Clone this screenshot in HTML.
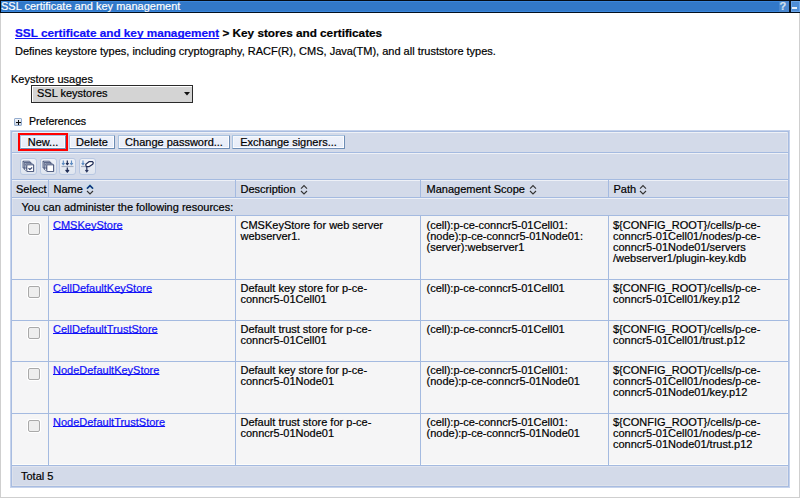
<!DOCTYPE html>
<html><head><meta charset="utf-8">
<style>
*{margin:0;padding:0;box-sizing:border-box}
html,body{width:800px;height:498px;overflow:hidden;background:#fff}
body{position:relative;-webkit-text-stroke:0.2px currentColor;font-family:"Liberation Sans",sans-serif;font-size:11px;line-height:11px;color:#000}
.a{position:absolute;white-space:nowrap}
#pb-l{position:absolute;left:0;top:0;width:1px;height:498px;background:#cfcfcf}
#pb-r{position:absolute;left:799px;top:0;width:1px;height:498px;background:#cfcfcf}
#pb-b{position:absolute;left:0;top:497px;width:800px;height:1px;background:#cfcfcf}
#title{position:absolute;left:0;top:0;width:800px;height:13px;background:#3278c8;border-top:1px solid #050b14;border-bottom:1px solid #03101e;border-left:1px solid #050b14;box-shadow:inset 0 1px 0 #3a86dc,inset 0 -1px 0 #3a86dc}
#title .t{position:absolute;left:0px;top:0px;color:#fff;font-size:11px;line-height:11px}
.lnk{color:#1010f8;text-decoration:underline}
.tl{text-underline-offset:0px}
.lnk{text-decoration-skip-ink:none}
b{font-weight:bold}
.sel{position:absolute;left:31px;top:85px;width:162px;height:18px;background:#d4d4d4;border:1px solid #2a2a2a;box-shadow:inset 1px 1px 0 #fff}
.tb{position:absolute;left:10px;top:130px;width:780px;height:358px;border:1px solid #c6d3ec;box-shadow:inset 0 0 0 1px #a8bce0;background:#d3dae9}
.hl{position:absolute;background:#a4bae0}
.wl{position:absolute;background:#eef1f7}
.btn{position:absolute;top:135px;height:14px;border:1px solid;border-color:#aac3e0 #6d8db5 #6d8db5 #aac3e0;background:linear-gradient(#eef2fa,#e6ecf8);box-shadow:inset -1px -1px 0 #fdfdff,inset 1px 1px 0 #f6f8fc;border-radius:1px;text-align:center;line-height:11px;padding-top:1px}
.ib{position:absolute;top:158px;width:17px;height:17px;border:1px solid #b9c8e2;border-radius:3px;background:linear-gradient(#eef1f7,#dfe5ef)}
.row{position:absolute;left:12px;width:776px;background:#f5f5f6;box-shadow:inset -1px 0 0 #fcfcfc}
.cb{position:absolute;left:28px;width:12px;height:12px;border:1.5px solid #a9a9a9;border-radius:2px;background:#eee;box-shadow:0 0 0 1px #fff}
</style></head><body>
<div id="pb-l"></div><div id="pb-r"></div><div id="pb-b"></div>
<div id="title"><div class="t">SSL certificate and key management</div>
 <div style="position:absolute;left:778px;top:0;width:10px;height:11px;background:#4a88d0"></div>
 <div style="position:absolute;left:778.5px;top:0px;color:#d3e0ee;font-size:11px;line-height:11px;font-weight:bold">?</div>
 <div style="position:absolute;left:788px;top:0;width:2px;height:11px;background:#0d1726"></div>
 <div style="position:absolute;left:790px;top:0;width:9px;height:11px;background:#4f8ed6;border:1px solid #6aa6ea"></div>
 <div style="position:absolute;left:791px;top:6px;width:5px;height:1.6px;background:#e8f0f8"></div>
 <div style="position:absolute;left:799px;top:-1px;width:1px;height:13px;background:#111"></div>
</div>

<div class="a" style="left:15px;top:27px;font-size:11.75px;font-weight:bold"><span class="lnk">SSL certificate and key management</span> &gt; Key stores and certificates</div>
<div class="a" style="left:15px;top:46px">Defines keystore types, including cryptography, RACF(R), CMS, Java(TM), and all truststore types.</div>
<div class="a" style="left:11px;top:74px">Keystore usages</div>
<div class="sel"></div>
<div class="a" style="left:37px;top:87.5px">SSL keystores</div>
<svg style="position:absolute;left:184px;top:92px" width="6" height="4"><path d="M0 0H6L3 3.5Z" fill="#111"/></svg>

<div style="position:absolute;left:14px;top:118px;width:8px;height:8px;border:1px solid #94acce;border-radius:1px;background:linear-gradient(#f4f6fa,#c9d3e2)"></div>
<div style="position:absolute;left:18px;top:120px;width:1px;height:5px;background:#111"></div><div style="position:absolute;left:16px;top:122px;width:5px;height:1px;background:#111"></div>
<div class="a" style="left:29px;top:116px;font-size:10.6px">Preferences</div>

<div class="tb"></div>
<!-- inner highlights -->
<div class="wl" style="left:12px;top:132px;width:776px;height:1px"></div>
<div class="wl" style="left:12px;top:132px;width:1px;height:354px;background:#dde1ec"></div>
<div class="wl" style="left:787px;top:132px;width:1px;height:354px;background:#dde1ec"></div>
<div class="wl" style="left:12px;top:485px;width:776px;height:1px;background:#dde1ea"></div>
<!-- red box & buttons -->
<div style="position:absolute;left:18px;top:133px;width:50px;height:18px;border:2px solid #f00"></div>
<div class="btn" style="left:20px;width:46px">New...</div>
<div class="btn" style="left:69px;width:46px">Delete</div>
<div class="btn" style="left:118px;width:112px">Change password...</div>
<div class="btn" style="left:232px;width:113px">Exchange signers...</div>
<div class="hl" style="left:12px;top:152px;width:776px;height:1px"></div>
<div class="wl" style="left:12px;top:153px;width:776px;height:1px"></div>
<!-- icons -->
<div class="ib" style="left:20px"></div>
<div class="ib" style="left:40px"></div>
<div class="ib" style="left:59px"></div>
<div class="ib" style="left:79px"></div>
<svg style="position:absolute;left:20px;top:158px" width="80" height="16">
 <g stroke="#3d4b74" stroke-width="0.8" stroke-linejoin="round">
  <path d="M3 3.2h6.5l1.3 1.3v6.8l-1.3-1.3H3z M3 3.2l1.3 1.3h6.5 M4.3 4.5v6.8l1.3 1.3" fill="#d2d7e2"/>
  <path d="M5.6 5.8h6.8l1.3 1.3v6.3H7v-1z" fill="#c3c9d7"/>
  <rect x="6.9" y="6.9" width="6.6" height="6.6" fill="#fff"/>
  <path d="M8.5 10.2l1.3 1.3 2.4-2" fill="none" stroke-width="1.1"/>
 </g>
 <g stroke="#3d4b74" stroke-width="0.8" stroke-linejoin="round" transform="translate(20,0)">
  <path d="M3 3.2h6.5l1.3 1.3v6.8l-1.3-1.3H3z M3 3.2l1.3 1.3h6.5 M4.3 4.5v6.8l1.3 1.3" fill="#d2d7e2"/>
  <path d="M5.6 5.8h6.8l1.3 1.3v6.3H7v-1z" fill="#c3c9d7"/>
  <rect x="6.9" y="6.9" width="6.6" height="6.6" fill="#fff"/>
 </g>
 <g transform="translate(39,0)">
  <path d="M4.3 2.5v4M3 5.2l1.3 1.5 1.3-1.5M12.5 2.5v4M11.2 5.2l1.3 1.5 1.3-1.5" stroke="#5d8cc2" stroke-width="1.1" fill="none"/>
  <path d="M8.3 2.5v4M7 5.2l1.3 1.5 1.3-1.5" stroke="#1f2c55" stroke-width="1.2" fill="none"/>
  <path d="M2.5 8.5h12" stroke="#a4aec0" stroke-width="1.2"/>
  <path d="M8.3 9.5v4.5M6.6 12l1.7 2 1.7-2" stroke="#1f2c55" stroke-width="1.2" fill="none"/>
 </g>
 <g transform="translate(59,0)">
  <path d="M4 2.5v4M2.7 5.2l1.3 1.5 1.3-1.5" stroke="#5d8cc2" stroke-width="1.1" fill="none"/>
  <path d="M2 8.5h4" stroke="#a4aec0" stroke-width="1.2"/>
  <path d="M6.8 6.2l3.5-2.6h3.2l0.8 1.2-0.6 1.4-3.4 2.4h-3.2z" fill="#fff" stroke="#1f2c55" stroke-width="1.2" stroke-linejoin="round"/>
  <path d="M7.8 9v5M6.4 12l1.4 1.8 1.4-1.8" stroke="#2a3760" stroke-width="1.2" fill="none"/>
 </g>
</svg>

<!-- header -->
<div class="hl" style="left:12px;top:179px;width:776px;height:1px"></div>
<div class="wl" style="left:12px;top:180px;width:776px;height:1px"></div>
<div class="hl" style="left:12px;top:197px;width:776px;height:1px"></div>
<div class="wl" style="left:12px;top:198px;width:776px;height:1px"></div>
<div class="hl" style="left:48px;top:180px;width:1px;height:17px"></div>
<div class="hl" style="left:235px;top:180px;width:1px;height:17px"></div>
<div class="hl" style="left:420px;top:180px;width:1px;height:17px"></div>
<div class="hl" style="left:608px;top:180px;width:1px;height:17px"></div>
<div class="a" style="left:16px;top:184px">Select</div>
<div class="a" style="left:53.5px;top:184px">Name</div>
<div class="a" style="left:240.5px;top:184px">Description</div>
<div class="a" style="left:426.5px;top:184px">Management Scope</div>
<div class="a" style="left:613.5px;top:184px">Path</div>
<svg style="position:absolute;left:0;top:0" width="800" height="200">
 <g fill="none" stroke-width="1.1">
  <path d="M87 188.6l3-3 3 3" stroke="#40c0b0" stroke-width="2"/><path d="M87 188.6l3-3 3 3" stroke="#14147a" stroke-width="1.3"/><path d="M87 191l3 3 3-3" stroke="#333"/>
  <path d="M301 188.6l3-3 3 3M301 191l3 3 3-3" stroke="#333"/>
  <path d="M530 188.6l3-3 3 3M530 191l3 3 3-3" stroke="#333"/>
  <path d="M640 188.6l3-3 3 3M640 191l3 3 3-3" stroke="#333"/>
 </g>
</svg>
<div class="a" style="left:21.5px;top:202px">You can administer the following resources:</div>
<div class="hl" style="left:12px;top:215px;width:776px;height:1px"></div>

<!-- rows -->
<div class="row" style="top:216px;height:63px"></div>
<div class="hl" style="left:12px;top:279px;width:776px;height:1px"></div>
<div class="row" style="top:280px;height:40px"></div>
<div class="hl" style="left:12px;top:320px;width:776px;height:1px"></div>
<div class="row" style="top:321px;height:40px"></div>
<div class="hl" style="left:12px;top:361px;width:776px;height:1px"></div>
<div class="row" style="top:362px;height:51px"></div>
<div class="hl" style="left:12px;top:413px;width:776px;height:1px"></div>
<div class="row" style="top:414px;height:51px"></div>
<div class="wl" style="left:12px;top:464px;width:776px;height:1px;background:#fdfdfb"></div>
<div class="hl" style="left:12px;top:465px;width:776px;height:1px"></div>
<div class="wl" style="left:12px;top:466px;width:776px;height:1px;background:#e0e4f0"></div>

<div class="hl" style="left:48px;top:216px;width:1px;height:249px"></div>
<div class="hl" style="left:235px;top:216px;width:1px;height:249px"></div>
<div class="hl" style="left:420px;top:216px;width:1px;height:249px"></div>
<div class="hl" style="left:608px;top:216px;width:1px;height:249px"></div>

<div class="cb" style="top:223px"></div>
<div class="cb" style="top:286px"></div>
<div class="cb" style="top:327px"></div>
<div class="cb" style="top:368px"></div>
<div class="cb" style="top:420px"></div>

<div class="a" style="left:53px;top:219.5px"><span class="lnk tl">CMSKeyStore</span></div>
<div class="a" style="left:240.5px;top:219.5px">CMSKeyStore for web server<br>webserver1.</div>
<div class="a" style="left:426.5px;top:219.5px">(cell):p-ce-conncr5-01Cell01:<br>(node):p-ce-conncr5-01Node01:<br>(server):webserver1</div>
<div class="a" style="left:613px;top:219.5px">${CONFIG_ROOT}/cells/p-ce-<br>conncr5-01Cell01/nodes/p-ce-<br>conncr5-01Node01/servers<br>/webserver1/plugin-key.kdb</div>

<div class="a" style="left:53px;top:283px"><span class="lnk tl">CellDefaultKeyStore</span></div>
<div class="a" style="left:240.5px;top:283px">Default key store for p-ce-<br>conncr5-01Cell01</div>
<div class="a" style="left:426.5px;top:283px">(cell):p-ce-conncr5-01Cell01</div>
<div class="a" style="left:613px;top:283px">${CONFIG_ROOT}/cells/p-ce-<br>conncr5-01Cell01/key.p12</div>

<div class="a" style="left:53px;top:324px"><span class="lnk tl">CellDefaultTrustStore</span></div>
<div class="a" style="left:240.5px;top:324px">Default trust store for p-ce-<br>conncr5-01Cell01</div>
<div class="a" style="left:426.5px;top:324px">(cell):p-ce-conncr5-01Cell01</div>
<div class="a" style="left:613px;top:324px">${CONFIG_ROOT}/cells/p-ce-<br>conncr5-01Cell01/trust.p12</div>

<div class="a" style="left:53px;top:365px"><span class="lnk tl">NodeDefaultKeyStore</span></div>
<div class="a" style="left:240.5px;top:365px">Default key store for p-ce-<br>conncr5-01Node01</div>
<div class="a" style="left:426.5px;top:365px">(cell):p-ce-conncr5-01Cell01:<br>(node):p-ce-conncr5-01Node01</div>
<div class="a" style="left:613px;top:365px">${CONFIG_ROOT}/cells/p-ce-<br>conncr5-01Cell01/nodes/p-ce-<br>conncr5-01Node01/key.p12</div>

<div class="a" style="left:53px;top:417px"><span class="lnk tl">NodeDefaultTrustStore</span></div>
<div class="a" style="left:240.5px;top:417px">Default trust store for p-ce-<br>conncr5-01Node01</div>
<div class="a" style="left:426.5px;top:417px">(cell):p-ce-conncr5-01Cell01:<br>(node):p-ce-conncr5-01Node01</div>
<div class="a" style="left:613px;top:417px">${CONFIG_ROOT}/cells/p-ce-<br>conncr5-01Cell01/nodes/p-ce-<br>conncr5-01Node01/trust.p12</div>

<div class="a" style="left:21px;top:470.5px">Total 5</div>
</body></html>
